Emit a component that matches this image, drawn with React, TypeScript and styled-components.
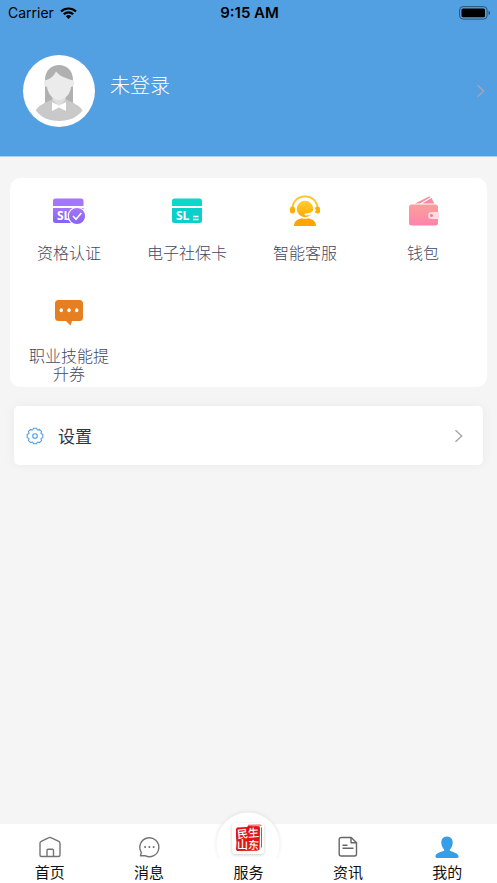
import React from 'react';
import styled, { createGlobalStyle } from 'styled-components';

const GlobalStyle = createGlobalStyle`
  * { box-sizing: border-box; }
  body {
    margin: 0;
    background: #f5f5f5;
    font-family: "Noto Sans CJK SC Light", "Noto Sans CJK SC", sans-serif;
    color: #3f4860;
  }
  button { border: 0; padding: 0; background: none; font: inherit; color: inherit; cursor: pointer; }
  a { color: inherit; text-decoration: none; }
  svg { display: block; }
`;

const Page = styled.div`
  min-height: 100vh;
  display: flex;
  flex-direction: column;
`;

const Header = styled.header`
  background: #529fe2;
  border-bottom: 1px solid #a9d0f2;
`;

const StatusBar = styled.div`
  display: grid;
  grid-template-columns: 1fr auto 1fr;
  align-items: center;
  height: 26px;
  padding: 0 6px 0 8px;
  font: 14px/26px Inter, sans-serif;
  color: #000;
`;

const Carrier = styled.span`
  display: flex;
  align-items: center;
  gap: 6px;
`;

const Clock = styled.time`
  font-size: 15px;
  font-weight: 600;
`;

const Battery = styled.span`
  justify-self: end;
`;

const Profile = styled.button`
  display: flex;
  width: 100%;
  align-items: center;
  height: 130px;
  padding: 0 11px 0 23px;
  gap: 15px;
  color: #fff;
  text-align: left;
`;

const UserName = styled.span`
  flex: 1;
  font-size: 20px;
  line-height: 28px;
  padding-bottom: 12px;
`;

const Services = styled.nav`
  display: grid;
  grid-template-columns: repeat(4, 1fr);
  row-gap: 20px;
  margin: 21px 10px 0;
  padding: 18px 5px 5px 0;
  border-radius: 10px;
  background: #fff;
`;

const Service = styled.a`
  display: flex;
  flex-direction: column;
  align-items: center;
  gap: 17px;
  min-height: 83px;
`;

const ServiceLabel = styled.span`
  width: 80px;
  font-size: 16px;
  line-height: 18px;
  text-align: center;
`;

const Settings = styled.button`
  display: flex;
  align-items: center;
  height: 59px;
  margin: 19px 14px 0;
  padding: 0 19px 0 12px;
  border-radius: 5px;
  background: #fff;
  box-shadow: 0 0 12px rgba(0, 0, 0, 0.05);
`;

const SettingsLabel = styled.span`
  flex: 1;
  padding-left: 14px;
  font-family: "Noto Sans CJK SC", sans-serif;
  font-size: 17px;
  line-height: 24px;
  text-align: left;
  color: #2c344b;
`;

const TabBar = styled.nav`
  display: grid;
  grid-template-columns: repeat(5, 1fr);
  height: 59px;
  margin-top: auto;
  background: #fff;
`;

const Tab = styled.a`
  position: relative;
  display: flex;
  flex-direction: column;
  align-items: center;
  padding-top: 11px;
  gap: 2px;
  font-family: "Noto Sans CJK SC", sans-serif;
  font-size: 15px;
  line-height: 22px;
  color: #111;
`;

const TabLabel = styled.span`
  position: relative;
`;

const Bump = styled.span`
  position: absolute;
  top: -15px;
  display: flex;
  justify-content: center;
`;

const IconSpace = styled.span`
  height: 24px;
`;

const Chevron = ({ color }: { color: string }) => (
  <svg width="10" height="14" viewBox="0 0 10 14" fill="none" stroke={color} strokeWidth="1.5">
    <path d="M1.500 1.200 7.700 7l-6.200 5.800" />
  </svg>
);

const Wifi = () => (
  <svg width="17" height="12" viewBox="0 0 17 12">
    <path d="M.3 3.700a11.800 11.800 0 0 1 16.400 0L15.200 5.300a9.600 9.600 0 0 0-13.400 0Z" />
    <path d="M3 6.500a8 8 0 0 1 11 0l-1.600 1.600a5.700 5.700 0 0 0-7.800 0Z" />
    <path d="M5.800 9.200a4 4 0 0 1 5.400 0L8.500 12Z" />
  </svg>
);

const BatteryIcon = () => (
  <svg width="32" height="14" viewBox="0 0 32 14">
    <rect x=".6" y=".6" width="27.500" height="12.500" rx="3.500" fill="none" stroke="#2b5476" strokeWidth="1" />
    <rect x="2.500" y="2.500" width="23.500" height="8.800" rx="1.600" />
    <path d="M29.500 4.700c2 .7 2 3.700 0 4.400Z" fill="#2b5476" />
  </svg>
);

const Avatar = () => (
  <svg width="72" height="72" viewBox="0 0 72 72">
    <circle cx="36" cy="36" r="36" fill="#fff" />
    <path d="M22 49V25C22 5 50 5 50 25v24Z" fill="#b0b0b0" />
    <path d="M12.800 55.500c2-5 9-7.500 17-11.500h12.400c8 4 15 6.500 17.300 11.500C54 62.500 46 66 36 66s-18-3.500-23.200-10.500Z" fill="#c9c9c9" />
    <path d="M29.500 38h13v7L36 51l-6.500-6Z" fill="#dedede" />
    <path d="M23.500 25c4-1.500 7.500-4 9.500-8.500 3.500 4.500 9.500 6.500 15.500 8.500 4 0 4 6-.500 7C47 39.500 42 45 36 45s-10.700-5.500-12-13c-4-1-4-7-.500-7Z" fill="#ebebeb" />
    <path d="M29 47l7 3.500 7-3.500v9l-7-3.500-7 3.500Z" fill="#fff" />
  </svg>
);

const BadgeText = styled.text`
  font: 700 12px "Open Sans", sans-serif;
  fill: #fff;
`;

const CertificateIcon = () => (
  <svg width="34" height="30" viewBox="0 0 34 30">
    <defs>
      <linearGradient id="violet" x2="0" y2="1">
        <stop stopColor="#a477fa" />
        <stop offset="1" stopColor="#8562f4" />
      </linearGradient>
    </defs>
    <path d="M1 10V5a2.500 2.500 0 0 1 2.500-2.500h25.500A2.500 2.500 0 0 1 31.500 5v5Z" fill="#a477fa" />
    <path d="M1 12h30.500v12.500A2.500 2.500 0 0 1 29 27H3.500A2.500 2.500 0 0 1 1 24.500Z" fill="url(#violet)" />
    <BadgeText x="5" y="24">SL</BadgeText>
    <circle cx="25" cy="20" r="8.700" fill="url(#violet)" stroke="#fff" strokeWidth="1.200" />
    <path d="m21 20 3 3.300 5.300-6.300" fill="none" stroke="#fff" strokeWidth="1.600" />
  </svg>
);

const SocialCardIcon = () => (
  <svg width="32" height="30" viewBox="0 0 32 30">
    <path d="M1 10V5a2.500 2.500 0 0 1 2.500-2.500h25A2.500 2.500 0 0 1 31 5v5Z" fill="#0bd8ca" />
    <path d="M1 12h30v12.500a2.500 2.500 0 0 1-2.500 2.500h-25A2.500 2.500 0 0 1 1 24.500Z" fill="#0bcfca" />
    <BadgeText x="5" y="24">SL</BadgeText>
    <path d="M22 20.500h5.500M22 23.500h5.500" stroke="#fff" strokeWidth="1.400" />
  </svg>
);

const SupportIcon = () => (
  <svg width="32" height="32" viewBox="0 0 32 32">
    <defs>
      <linearGradient id="amber" x2="0" y2="1">
        <stop stopColor="#ffcf33" />
        <stop offset="1" stopColor="#ffa800" />
      </linearGradient>
    </defs>
    <path d="M3.500 13C4.500 -2.500 27.500 -2.500 28.500 13" fill="none" stroke="#ffc32a" strokeWidth="1.800" />
    <rect x="1" y="11.500" width="5" height="7" rx="2.200" fill="#ffad0b" />
    <rect x="26" y="11.500" width="5" height="7" rx="2.200" fill="#ffad0b" />
    <circle cx="16" cy="14" r="8.200" fill="url(#amber)" />
    <path d="M26 15c-2 3-5 4.500-9.500 4.500" fill="none" stroke="#fff" strokeWidth="2" strokeLinecap="round" />
    <path d="M5 31c0-4.500 3-7 8-7.800 2 .7 4 .7 6 0 5 .8 8 3.300 8 7.800Z" fill="#ffa400" />
  </svg>
);

const WalletIcon = () => (
  <svg width="32" height="32" viewBox="0 0 32 32">
    <defs>
      <linearGradient id="pink" x2="0" y2="1">
        <stop stopColor="#f9a09a" />
        <stop offset="1" stopColor="#ff83ac" />
      </linearGradient>
    </defs>
    <path d="m8 8.500 14.500-7.200.700 1.300L13 8.500Z" fill="#f590a0" />
    <path d="M15 8.500 24.500 3l2.800 5.500Z" fill="#f78ba5" />
    <rect x="2" y="9.500" width="29" height="21" rx="2.500" fill="url(#pink)" />
    <path d="M32 17h-7.500a3.500 3.500 0 0 0 0 7H32Z" fill="#ffdcdf" />
    <circle cx="24.500" cy="20.500" r="1.500" fill="#f57896" />
  </svg>
);

const VoucherIcon = () => (
  <svg width="30" height="30" viewBox="0 0 30 30">
    <path d="M4.500 1h21A3.500 3.500 0 0 1 29 4.500v14a3.500 3.500 0 0 1-3.500 3.500H18L16.500 26.500 12 22H4.500A3.500 3.500 0 0 1 1 18.500V4.500a3.500 3.500 0 0 1 3.500-3.500Z" fill="#e67e22" />
    <g fill="#fff">
      <ellipse cx="7.300" cy="11.200" rx="1.700" ry="2" />
      <ellipse cx="15" cy="11.200" rx="1.700" ry="2" />
      <ellipse cx="22.700" cy="11.200" rx="1.700" ry="2" />
    </g>
  </svg>
);

const GearIcon = () => (
  <svg width="18" height="18" viewBox="0 0 18 18" fill="none" stroke="#529fe2" strokeWidth="1.100" strokeLinejoin="round">
    <path d="M16.800 7.300V10.700Q13.800 11 15.700 13.400L13.400 15.700Q11 13.800 10.700 16.800H7.300Q7 13.800 4.600 15.700L2.300 13.400Q4.200 11 1.200 10.700V7.300Q4.200 7 2.300 4.600L4.600 2.300Q7 4.200 7.300 1.200H10.700Q11 4.200 13.400 2.300L15.700 4.600Q13.800 7 16.800 7.300Z" />
    <circle cx="9" cy="9" r="2.300" />
  </svg>
);

const HomeIcon = () => (
  <svg width="24" height="24" viewBox="0 0 24 24" fill="none" stroke="#747474" strokeWidth="1.400" strokeLinejoin="round">
    <path d="M2 8.200a2 2 0 0 1 1.200-1.800L11 2.700a2 2 0 0 1 1.800 0l8 3.700A2 2 0 0 1 22 8.200V20a1.500 1.500 0 0 1-1.500 1.500h-17A1.500 1.500 0 0 1 2 20Z" />
    <path d="M9 21.500v-6.300a1 1 0 0 1 1-1h4.500a1 1 0 0 1 1 1v6.300" />
  </svg>
);

const MessageIcon = () => (
  <svg width="24" height="24" viewBox="0 0 24 24" fill="none" stroke="#747474" strokeWidth="1.400" strokeLinejoin="round">
    <path d="M4.300 17.300A9.500 9.500 0 1 1 8 20.700H3.500Z" />
    <path d="M7.300 12h1.600M11.600 12h1.600M15.800 12h1.600" strokeWidth="1.800" />
  </svg>
);

const NewsIcon = () => (
  <svg width="24" height="24" viewBox="0 0 24 24" fill="none" stroke="#666" strokeWidth="1.400" strokeLinejoin="round">
    <path d="M5.200 2.500h10l5.300 5.200V19a2 2 0 0 1-2 2H5.200a2 2 0 0 1-2-2V4.500a2 2 0 0 1 2-2Z" />
    <path d="M15 2.500v5.300h5.500M6.500 10.200h5M6.500 13.200h11" />
  </svg>
);

const MineIcon = () => (
  <svg width="24" height="24" viewBox="0 0 24 24">
    <path d="M12 1.500c-4 0-6 3-5.700 6.500.2 3 1.300 5 2.900 6.500v1c-2 1.700-8.700 2-8.700 5.500 0 1.500.7 2 2 2h19.500c1.300 0 1.800-.7 1.500-2-.5-3.300-6.700-3.800-8.700-5.500v-1c1.600-1.500 2.700-3.500 2.900-6.500C17.900 4.500 16 1.500 12 1.500Z" fill="#359ee8" />
  </svg>
);

const SealText = styled.text`
  font: 500 11px "Noto Sans CJK SC", sans-serif;
  fill: #fff;
`;

const SealIcon = () => (
  <svg width="72" height="50" viewBox="0 0 72 50">
    <defs>
      <linearGradient id="halo" x2="0" y2="1">
        <stop stopColor="#e6e6e6" />
        <stop offset="1" stopColor="#fff" />
      </linearGradient>
      <filter id="soft" x="-20%" y="-20%" width="140%" height="140%">
        <feGaussianBlur stdDeviation="1.500" />
      </filter>
    </defs>
    <circle cx="36" cy="35" r="33" fill="url(#halo)" filter="url(#soft)" />
    <circle cx="36" cy="35" r="31.500" fill="#fff" />
    <rect x="20" y="15" width="32" height="31" rx="3" fill="#ccc" filter="url(#soft)" />
    <rect x="20" y="14" width="32" height="31" rx="3" fill="#fff" />
    <path d="m24 20 1-1.500 10-.5 1-1 11.500.2.500 2-.500 21.500-2.500 1-20 .3-1-1.500.5-7-.5-6Z" fill="#df1414" />
    <path d="M49.500 18.500v20M36 16.300l12.500-.3 1 1" fill="none" stroke="#df1414" strokeWidth=".8" />
    <SealText x="25" y="29" transform="rotate(-6 30 25)">民</SealText>
    <SealText x="36" y="28" transform="rotate(-4 41 24)">生</SealText>
    <SealText x="25" y="40">山</SealText>
    <SealText x="36" y="40" transform="rotate(4 41 35)">东</SealText>
  </svg>
);

const services = [
  { label: '资格认证', Icon: CertificateIcon },
  { label: '电子社保卡', Icon: SocialCardIcon },
  { label: '智能客服', Icon: SupportIcon },
  { label: '钱包', Icon: WalletIcon },
  { label: '职业技能提升券', Icon: VoucherIcon },
];

const ServiceIcon = styled.span`
  display: flex;
  align-items: center;
  height: 30px;
`;

const tabs = [
  { label: '首页', Icon: HomeIcon },
  { label: '消息', Icon: MessageIcon },
  { label: '服务', Icon: SealIcon, raised: true },
  { label: '资讯', Icon: NewsIcon },
  { label: '我的', Icon: MineIcon },
];

export default function App() {
  return (
    <>
      <GlobalStyle />
      <Page>
        <Header>
          <StatusBar>
            <Carrier>Carrier <Wifi /></Carrier>
            <Clock>9:15 AM</Clock>
            <Battery><BatteryIcon /></Battery>
          </StatusBar>
          <Profile>
            <Avatar />
            <UserName>未登录</UserName>
            <Chevron color="#a3a5b3" />
          </Profile>
        </Header>
        <Services>
          {services.map(({ label, Icon }) => (
            <Service href="#" key={label}>
              <ServiceIcon><Icon /></ServiceIcon>
              <ServiceLabel>{label}</ServiceLabel>
            </Service>
          ))}
        </Services>
        <Settings>
          <GearIcon />
          <SettingsLabel>设置</SettingsLabel>
          <Chevron color="#a6a8b4" />
        </Settings>
        <TabBar>
          {tabs.map(({ label, Icon, raised }) => (
            <Tab href="#" key={label}>
              {raised ? (
                <>
                  <Bump><Icon /></Bump>
                  <IconSpace />
                </>
              ) : (
                <Icon />
              )}
              <TabLabel>{label}</TabLabel>
            </Tab>
          ))}
        </TabBar>
      </Page>
    </>
  );
}
